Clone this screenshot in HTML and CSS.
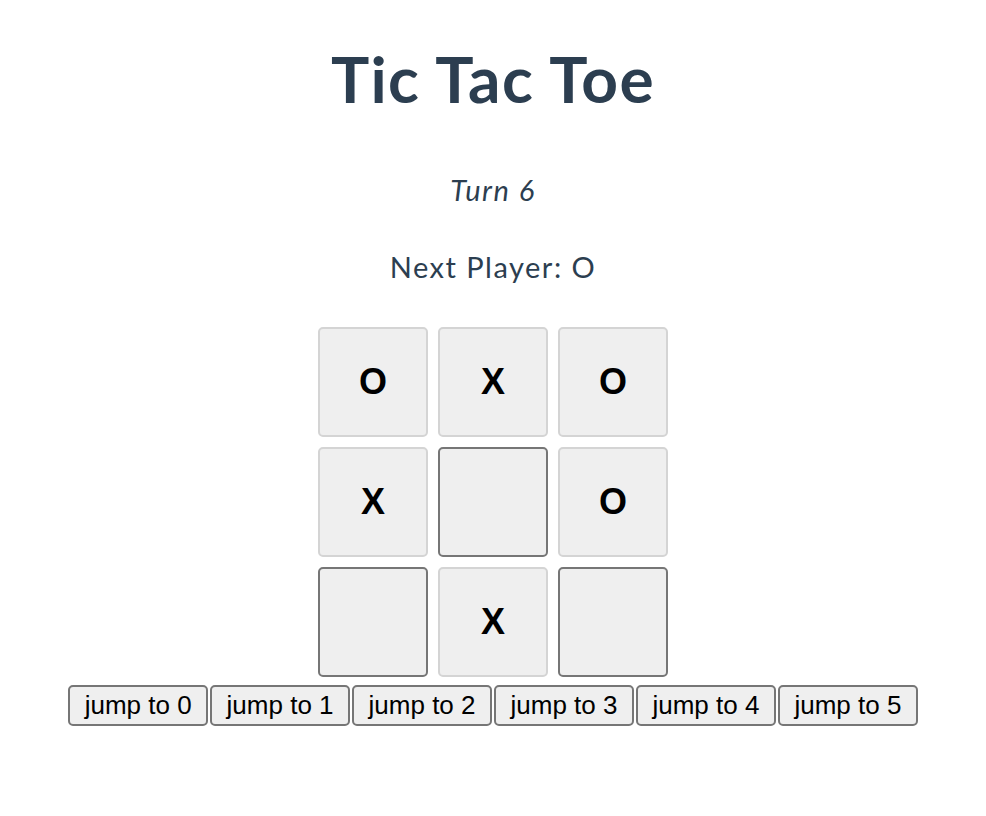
FILE: index.html
```html
<!DOCTYPE html>
<html lang="en">
<head>
<meta charset="utf-8">
<title>Tic Tac Toe</title>
<link rel="stylesheet" href="styles.css">
</head>
<body>
<div class="app">
  <h1 class="title">Tic Tac Toe</h1>
  <p class="turn">Turn 6</p>
  <p class="next">Next Player: O</p>
  <div class="board">
    <button class="cell filled" disabled>O</button>
    <button class="cell filled" disabled>X</button>
    <button class="cell filled" disabled>O</button>
    <button class="cell filled" disabled>X</button>
    <button class="cell"></button>
    <button class="cell filled" disabled>O</button>
    <button class="cell"></button>
    <button class="cell filled" disabled>X</button>
    <button class="cell"></button>
  </div>
  <div class="history">
    <button class="jump">jump to 0</button>
    <button class="jump">jump to 1</button>
    <button class="jump">jump to 2</button>
    <button class="jump">jump to 3</button>
    <button class="jump">jump to 4</button>
    <button class="jump">jump to 5</button>
  </div>
</div>
</body>
</html>
```

FILE: styles.css
```css
* { box-sizing: border-box; }
html, body { margin: 0; padding: 0; background: #ffffff; }
body {
  font-family: Lato, "Noto Sans", sans-serif;
  color: #2c3e50;
}
.app {
  display: flex;
  flex-direction: column;
  align-items: center;
  text-align: center;
}
.title {
  margin: 0;
  padding-top: 39px;
  font-size: 64px;
  line-height: 80px;
  font-weight: 700;
  letter-spacing: 1.4px;
}
.turn {
  margin: 53px 0 0;
  font-size: 29px;
  line-height: 35px;
  font-style: italic;
  letter-spacing: 1.5px;
}
.next {
  margin: 42px 0 0;
  font-size: 29px;
  line-height: 35px;
  letter-spacing: 1.5px;
}
.board {
  margin-top: 43px;
  display: grid;
  grid-template-columns: repeat(3, 110px);
  grid-auto-rows: 110px;
  gap: 10px;
}
.cell {
  margin: 0;
  padding: 0;
  background: #efefef;
  border: 2px solid #767676;
  border-radius: 5px;
  font-family: "Liberation Sans", Arial, sans-serif;
  font-weight: 700;
  font-size: 36px;
  color: #000;
}
.cell.filled {
  border-color: #d4d4d4;
  color: #000;
}
.history {
  margin-top: 8px;
  display: flex;
  gap: 2px;
}
.jump {
  margin: 0;
  height: 41px;
  padding: 0 14.5px;
  background: #efefef;
  border: 2px solid #767676;
  border-radius: 5px;
  font-family: "Liberation Sans", Arial, sans-serif;
  font-size: 26px;
  color: #000;
}
```
